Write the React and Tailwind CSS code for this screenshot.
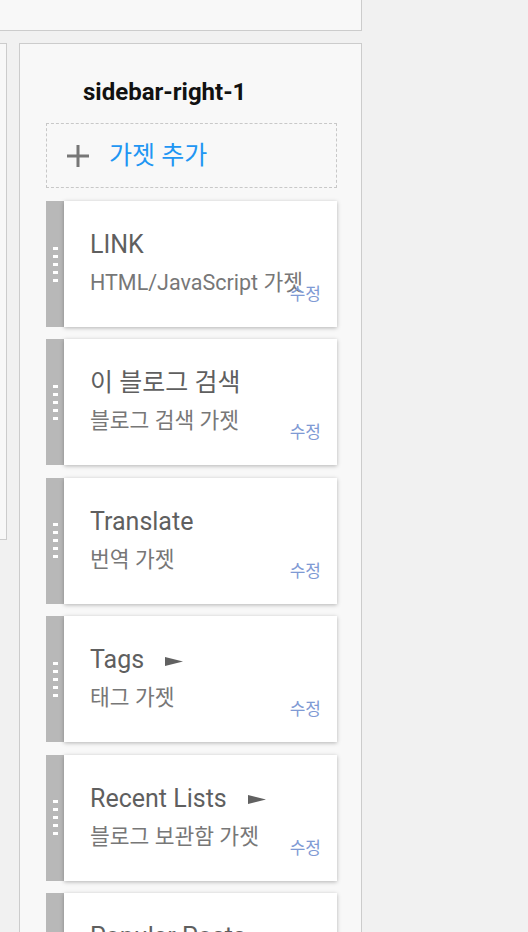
const FONT = "font-['Roboto','Noto_Sans_CJK_KR',sans-serif]";

const GADGETS = [
  { title: 'LINK', sub: 'HTML/JavaScript 가젯' },
  { title: '이 블로그 검색', sub: '블로그 검색 가젯' },
  { title: 'Translate', sub: '번역 가젯' },
  { title: 'Tags', sub: '태그 가젯', arrow: true },
  { title: 'Recent Lists', sub: '블로그 보관함 가젯', arrow: true },
  { title: 'Popular Posts', sub: '인기 게시물 가젯' },
];

function Arrow() {
  return (
    <svg width="18" height="9" viewBox="0 0 18 9" className="ml-[21px] mt-[2px]">
      <polygon points="0,0 18,4.5 0,9" fill="#616161" />
    </svg>
  );
}

function GadgetCard({ title, sub, arrow }) {
  return (
    <div className="flex h-[126px] flex-shrink-0">
      {/* drag handle */}
      <div className="w-[18px] bg-[#b8b8b8] flex flex-col items-center justify-center gap-[5px] pl-[1px]">
        {[0, 1, 2, 3, 4].map(i => (
          <span key={i} className="block w-[5px] h-[3px] bg-white" />
        ))}
      </div>
      <div className="relative flex-1 bg-white shadow-[0_1px_4px_rgba(0,0,0,0.28)] pl-[26px] pt-[28px]">
        <div className="flex items-center h-[32px] text-[25px] leading-[32px] text-[#5f5f5f]">
          <span>{title}</span>
          {arrow && <Arrow />}
        </div>
        <div className="mt-[8px] text-[21.5px] leading-[28px] text-[#777]">{sub}</div>
        <span className="absolute right-[16px] top-[83px] text-[17px] leading-[20px] text-[#7f9ad4]">수정</span>
      </div>
    </div>
  );
}

export default function App() {
  return (
    <div className={`w-[528px] h-[932px] overflow-hidden bg-[#f1f1f1] ${FONT}`}>
      {/* top panel */}
      <div className="w-[362px] h-[31px] bg-[#f8f8f8] border-r border-b border-[#cccccc]" />

      <div className="flex items-start mt-[12px]">
        {/* left column edge */}
        <div className="w-[7px] h-[497px] bg-[#f8f8f8] border-t border-r border-b border-[#cccccc]" />

        {/* sidebar-right-1 */}
        <div className="ml-[12px] w-[343px] h-[900px] bg-[#f8f8f8] border border-[#cccccc] pl-[26px] pr-[24px] pt-[34px]">
          <h2 className="pl-[37px] text-[24px] leading-[28px] font-bold text-[#111]">sidebar-right-1</h2>

          <button className="mt-[17px] w-full h-[65px] border border-dashed border-[#c8c8c8] flex items-center pl-[20px]">
            <svg width="22" height="22" viewBox="0 0 22 22">
              <path d="M11 0v22M0 11h22" stroke="#777" strokeWidth="3" />
            </svg>
            <span className="ml-[20px] text-[25px] leading-[28px] text-[#2196f3]">가젯 추가</span>
          </button>

          <div className="mt-[13px] flex flex-col gap-[12.4px]">
            {GADGETS.map(g => (
              <GadgetCard key={g.title} {...g} />
            ))}
          </div>
        </div>
      </div>
    </div>
  );
}
